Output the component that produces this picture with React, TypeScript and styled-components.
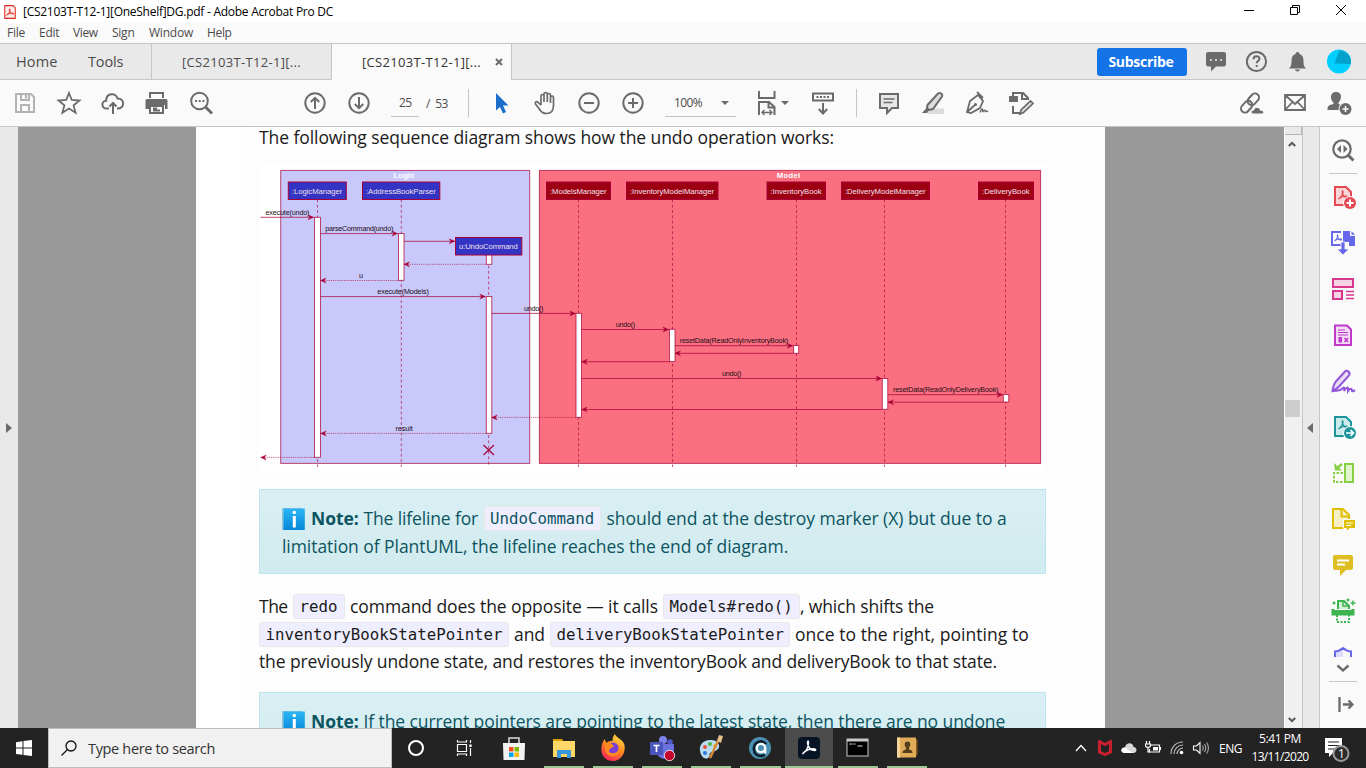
import React from "react";
import styled, { createGlobalStyle } from "styled-components";

const UI = `"Open Sans", "Noto Sans", sans-serif`;
const INK = "#6b6b6b";
const UML = "#a80036";

const GlobalStyle = createGlobalStyle`
  * { box-sizing: border-box; }
  body { margin: 0; overflow: hidden; font-family: ${UI}; background: #fff; }
`;

const Window = styled.div`
  width: 1366px;
  height: 768px;
  display: flex;
  flex-direction: column;
  overflow: hidden;
  background: #fafafa;
`;

const Label = styled.span<{ $size: number; $w?: number; $ls?: number; $color?: string; $bold?: boolean }>`
  flex: none;
  white-space: pre;
  font-size: ${(p) => p.$size}px;
  width: ${(p) => (p.$w ? `${p.$w}px` : "auto")};
  letter-spacing: ${(p) => p.$ls ?? 0}px;
  color: ${(p) => p.$color ?? "#4b4b4b"};
  font-weight: ${(p) => (p.$bold ? 700 : 400)};
`;

const Spacer = styled.div`
  flex: 1;
`;

/* ---------- window chrome ---------- */

const TitleBar = styled.header`
  flex: none;
  height: 23px;
  display: flex;
  align-items: center;
  padding-left: 3px;
  gap: 6px;
  background: #fff;
`;

const WindowButtons = styled.div`
  display: flex;
  height: 100%;
  padding: 0 2px 3px 0;
`;

const WindowButton = styled.div`
  width: 46px;
  display: flex;
  align-items: center;
  justify-content: center;
`;

const MenuBar = styled.nav`
  flex: none;
  height: 20px;
  display: flex;
  align-items: center;
  padding-left: 7px;
  background: #fafafa;
`;

const MenuItem = styled.div<{ $w: number }>`
  width: ${(p) => p.$w}px;
  display: flex;
  line-height: 18px;
`;

const TabBar = styled.div`
  flex: none;
  height: 37px;
  display: flex;
  background: #e9e9e9;
  border-top: 1px solid #c6c6c6;
  border-bottom: 1px solid #c6c6c6;
`;

const TabHome = styled.div`
  width: 152px;
  display: flex;
  align-items: center;
  gap: 30px;
  padding-left: 16px;
  border-right: 1px solid #c6c6c6;
`;

const Tab = styled.div<{ $active?: boolean }>`
  width: 180px;
  height: ${(p) => (p.$active ? 36 : 35)}px;
  display: flex;
  align-items: center;
  padding-left: 30px;
  gap: 12.5px;
  border-right: 1px solid #c6c6c6;
  background: ${(p) => (p.$active ? "#fafafa" : "transparent")};
`;

const TabActions = styled.div`
  display: flex;
  align-items: center;
  gap: 13px;
  padding-right: 13px;
`;

const SubscribeButton = styled.button`
  width: 90px;
  height: 28px;
  margin-right: 2px;
  padding: 0 2px 0 0;
  border: 0;
  border-radius: 3px;
  background: #1473e6;
  font-family: ${UI};
  line-height: 26px;
`;

const Toolbar = styled.div`
  flex: none;
  height: 47px;
  display: flex;
  align-items: center;
  padding-right: 13px;
  background: #fafafa;
  border-bottom: 1px solid #c6c6c6;
`;

const ToolGroup = styled.div<{ $left?: number }>`
  display: flex;
  align-items: center;
  gap: 16px;
  margin-left: ${(p) => p.$left ?? 0}px;
`;

const Divider = styled.div<{ $left: number }>`
  width: 1px;
  height: 28px;
  margin-left: ${(p) => p.$left}px;
  background: #c6c6c6;
`;

const Field = styled.div<{ $w: number; $left: number; $pad: number }>`
  width: ${(p) => p.$w}px;
  height: 28px;
  margin-left: ${(p) => p.$left}px;
  padding-left: ${(p) => p.$pad}px;
  display: flex;
  align-items: center;
  border-bottom: 1px solid #c2c2c2;
`;

const Caret = styled.i<{ $left: number }>`
  margin-left: ${(p) => p.$left}px;
  border: 4px solid transparent;
  border-top-color: #6b6b6b;
  border-bottom: 0;
`;

/* ---------- workspace ---------- */

const Workspace = styled.div`
  flex: none;
  height: 601px;
  display: flex;
  overflow: hidden;
`;

const SideHandle = styled.div<{ $w: number; $right?: boolean }>`
  flex: none;
  width: ${(p) => p.$w}px;
  display: flex;
  align-items: center;
  justify-content: ${(p) => (p.$right ? "flex-start" : "center")};
  padding-left: ${(p) => (p.$right ? 4 : 0)}px;
  background: #e9e9e9;
  border-left: ${(p) => (p.$right ? "1px solid #c6c6c6" : "0")};
  border-right: ${(p) => (p.$right ? "1px solid #c6c6c6" : "0")};
`;

const HandleArrow = styled.i<{ $dir: "left" | "right" }>`
  border: 5px solid transparent;
  ${(p) =>
    p.$dir === "right"
      ? "border-left: 6px solid #6b6b6b; border-right: 0;"
      : "border-right: 6px solid #6b6b6b; border-left: 0;"}
`;

const Canvas = styled.div`
  flex: none;
  width: 1266px;
  display: flex;
  background: #999;
  padding-left: 178px;
`;

const Page = styled.main`
  width: 909px;
  padding-left: 63px;
  background: linear-gradient(to right, #fff 45px, #fdfdfd 45px);
  overflow: hidden;
`;

const Article = styled.div`
  width: 787px;
`;

const Line = styled.p<{ $color?: string; $h?: number }>`
  margin: 0;
  height: ${(p) => p.$h ?? 27.5}px;
  line-height: ${(p) => p.$h ?? 27.5}px;
  font-size: 17.5px;
  display: flex;
  align-items: center;
  color: ${(p) => p.$color ?? "#1a1a1a"};
  white-space: pre;
`;

const Chunk = styled.span<{ $w?: number; $ls?: number; $bold?: boolean }>`
  flex: none;
  width: ${(p) => (p.$w ? `${p.$w}px` : "auto")};
  letter-spacing: ${(p) => p.$ls ?? -0.075}px;
  font-weight: ${(p) => (p.$bold ? 700 : 400)};
`;

const Code = styled.code<{ $w: number; $gap: number }>`
  flex: none;
  width: ${(p) => p.$w}px;
  height: 25px;
  margin-right: ${(p) => p.$gap}px;
  padding-left: 5.5px;
  line-height: 24px;
  border: 1px solid #e8e8e8;
  border-radius: 3px;
  background: #eef;
  font-family: "DejaVu Sans Mono", monospace;
  font-size: 15.75px;
`;

const Figure = styled.figure`
  margin: 15px 0 17px;
  height: 309px;
  background: #fff;
`;

const Note = styled.aside`
  height: 85px;
  margin-bottom: 19px;
  padding: 15px 22px;
  border: 1px solid #bee5eb;
  background: linear-gradient(#d9eff3, #d1ebef);
`;

const Prose = styled.div`
  height: 99px;
`;

const ScrollBar = styled.div`
  flex: none;
  width: 18px;
  display: flex;
  flex-direction: column;
  align-items: center;
  border-left: 1px solid #fff;
  background: #f0f0f0;
  padding-bottom: 4px;
`;

const ScrollSplit = styled.div`
  width: 100%;
  height: 8px;
  margin-bottom: 5px;
  background: #e9e9e9;
  border-bottom: 1px solid #b5b5b5;
  border-right: 1px solid #b5b5b5;
`;

const ScrollThumb = styled.div`
  width: 15px;
  height: 17px;
  margin: 252px 2px 0 0;
  background: #cdcdcd;
`;

const ScrollArrow = styled.div`
  margin-right: 3px;
`;

const ToolPane = styled.aside`
  flex: none;
  width: 46px;
  display: flex;
  flex-direction: column;
  align-items: center;
  padding-top: 9px;
  background: #fafafa;
`;

const PaneRule = styled.hr<{ $top: number; $bottom: number }>`
  flex: none;
  width: 28px;
  height: 1px;
  border: 0;
  margin: ${(p) => p.$top}px 0 ${(p) => p.$bottom}px;
  background: #c6c6c6;
`;

const PaneList = styled.div`
  flex: none;
  height: 474px;
  margin-bottom: 4px;
  display: flex;
  flex-direction: column;
  gap: 18px;
  overflow: hidden;
`;

/* ---------- taskbar ---------- */

const TaskBar = styled.footer`
  flex: none;
  height: 40px;
  display: flex;
  background: #232323;
`;

const StartButton = styled.div`
  width: 48px;
  display: flex;
  align-items: center;
  justify-content: center;
`;

const SearchBox = styled.div`
  width: 344px;
  display: flex;
  align-items: center;
  gap: 11px;
  padding-left: 12px;
  background: #f1f1f1;
  border: 1px solid #bcbcbc;
`;

const TaskItem = styled.div<{ $open?: boolean; $active?: boolean; $w?: number }>`
  position: relative;
  width: ${(p) => p.$w ?? 49}px;
  display: flex;
  align-items: center;
  justify-content: center;
  background: ${(p) => (p.$active ? "#4c4c4c" : "transparent")};
  &::after {
    content: "";
    position: absolute;
    bottom: 0;
    left: ${(p) => (p.$active ? 0 : 5)}px;
    right: ${(p) => (p.$active ? 0 : 4)}px;
    height: 2px;
    background: ${(p) => (p.$open ? "#9cc893" : "transparent")};
  }
`;

const Tray = styled.div`
  display: flex;
  align-items: center;
`;

const TraySlot = styled.div<{ $w: number }>`
  width: ${(p) => p.$w}px;
  display: flex;
  justify-content: center;
`;

const Clock = styled.div`
  width: 64px;
  display: flex;
  flex-direction: column;
  align-items: center;
  line-height: 18px;
`;

/* ---------- icons ---------- */

type GlyphProps = { children: React.ReactNode; size?: number; stroke?: string; sw?: number; box?: string };

const GlyphSvg = styled.svg`
  display: block;
  flex: none;
`;

const Glyph = ({ children, size = 28, stroke = INK, sw = 2, box }: GlyphProps) => (
  <GlyphSvg width={size} height={size} viewBox={box ?? `0 0 ${size} ${size}`} fill="none" stroke={stroke} strokeWidth={sw}>
    {children}
  </GlyphSvg>
);

const PDF_CURVE = "M0 8C3 6 5 2 4.400.200 4-.800 3.200.600 4 2.600 5 5 7 7 9 6.600c1-.400 0-1.600-2-1.400C4 5.400 1.500 6.500 0 8z";

const PaneIcons = [
  <Glyph stroke="#e34850" key="create">
    <path d="M6 4h11l5 5v13H6z" fill="#f9d5d7" />
    <path d={PDF_CURVE} transform="translate(9.500 8)" strokeWidth="1.300" />
    <circle cx="21" cy="20" r="7" fill="#fafafa" stroke="none" />
    <circle cx="21" cy="20" r="6" fill="#e34850" stroke="none" />
    <path d="M21 16.500v7M17.500 20h7" stroke="#fff" />
  </Glyph>,
  <Glyph stroke="#6767ec" key="combine">
    <path d="M12 16H3V3h9" />
    <path d="M14 2h7v5h5v10h-6v-4h-6z" fill="#6767ec" stroke="none" />
    <path d="M22.500 2.200v3.500h3.500z" fill="#6767ec" stroke="none" />
    <path d={PDF_CURVE} transform="translate(5.500 6) scale(.75)" strokeWidth="1.400" />
    <path d="M12 13h4v7h4l-6 6-6-6h4z" fill="#6767ec" stroke="#fafafa" strokeWidth="0.800" />
  </Glyph>,
  <Glyph stroke="#d83790" key="organise">
    <path d="M4 4h20v8H4zM4 16h9v8H4z" fill="#f7d3e5" />
    <path d="M17 16.500h8M17 20h8M17 23.500h8" strokeWidth="1.300" />
  </Glyph>,
  <Glyph stroke="#c038cc" key="redact">
    <path d="M6 4.500h12l4 4V24H6z" fill="#f3daf5" />
    <path d="M9 9h7M9 11.500h10M9 14h10" strokeWidth="1.200" />
    <path d="M9.500 16H13v5l-1.750 1L9.500 21z" fill="#c038cc" stroke="none" />
    <path d="M15.500 17l3.500 4M19 17l-3.500 4" strokeWidth="1.500" />
  </Glyph>,
  <Glyph stroke="#9256d9" key="sign">
    <path d="M3.500 24c.5-4 1.500-7 3-9L16 4.500c2-2 6 1 4 4L10 19.500C8 21.500 6 23 3.500 24z" fill="#e9ddf8" />
    <path d="M4 24c5 0 8-1 10-3 1-1.500 2 .5 1 3 2-3 4-5 4-2v2c2-3 4-3 4 0 1 1 2 0 3-1" />
  </Glyph>,
  <Glyph stroke="#1b959a" key="export">
    <path d="M6 4h11l5 5v14H6z" fill="#cdebec" />
    <path d={PDF_CURVE} transform="translate(9.500 8)" strokeWidth="1.300" />
    <circle cx="21" cy="20" r="7" fill="#fafafa" stroke="none" />
    <circle cx="21" cy="20" r="6" fill="#1b959a" stroke="none" />
    <path d="M17 20h7M21.500 17l3 3-3 3" stroke="#fff" strokeWidth="1.700" />
  </Glyph>,
  <Glyph stroke="#85d044" key="reorder">
    <path d="M16 5h8v18h-8z" fill="#e0f5cf" />
    <path d="M13 5L7 10" strokeWidth="2.500" />
    <path d="M5 4l1 7.500h7z" fill="#85d044" stroke="none" />
    <path d="M14 14H5v9h9" strokeDasharray="2.500 1.500" />
  </Glyph>,
  <Glyph stroke="#dfbf00" key="send">
    <path d="M4 4h10l6 6v13H4z" fill="#f6efc4" />
    <path d="M12.500 4v7.500H20" />
    <path d="M14.500 14.500H26.500v9h-6l-3 3.500v-3.500h-3z" fill="#dfbf00" stroke="#fafafa" strokeWidth="1" />
    <path d="M17 18h7M17 20.500h5" stroke="#fff" strokeWidth="1.200" />
  </Glyph>,
  <Glyph stroke="none" key="comment">
    <path d="M6 4h16q2 0 2 2v11q0 2-2 2h-5l-6 6v-6H6q-2 0-2-2V6q0-2 2-2z" fill="#debe22" />
    <path d="M8 9.500h12M8 13.500h8" stroke="#fff" strokeWidth="1.800" />
  </Glyph>,
  <Glyph stroke="#3db450" key="enhance">
    <path d="M9 12V4h6l5 5v3" fill="#d5f0d8" />
    <path d="M14 4v5h6" strokeWidth="1.500" />
    <path d="M4 12v5h20v-5" strokeWidth="3" />
    <path d="M5 15h18" strokeWidth="4" />
    <path d="M8 18v7h12v-7" strokeDasharray="2 1.500" />
    <path d="M24 3.500v5M21.500 6h5M5 4.500v3M3.500 6h3M19 1.500v3M17.500 3h3" strokeWidth="1.400" />
  </Glyph>,
  <Glyph stroke="#6767ec" key="protect">
    <path d="M6 20V8l8-3v15z" fill="#dcdcfb" stroke="none" />
    <path d="M6 22V8.500c3 0 5-1 8-3.500 3 2.500 5 3.500 8 3.500V22" />
  </Glyph>,
];

/* ---------- sequence diagram ---------- */

const DIAGRAM_FONT = `"Liberation Sans", Arial, sans-serif`;

const Participant = ({ x, y, w, name, model }: { x: number; y: number; w: number; name: string; model?: boolean }) => (
  <g>
    <rect x={x} y={y} width={w} height={17.5} fill={model ? "#9d0012" : "#3333c4"} stroke={UML} />
    <text x={x + 3.5} y={y + 11.7} textLength={w - 7.5} fontSize="7.700" fill="#f0e2ea">
      {name}
    </text>
  </g>
);

const Lifeline = ({ x, y = 199.5 }: { x: number; y?: number }) => (
  <path d={`M${x} ${y}V467`} stroke={UML} strokeOpacity="0.650" strokeDasharray="2.800 2.500" />
);

const Activation = ({ x, y, h, w = 5.5 }: { x: number; y: number; h: number; w?: number }) => (
  <rect x={x} y={y} width={w} height={h} fill="#fff" stroke={UML} strokeOpacity="0.800" strokeWidth="0.900" />
);

const Message = ({ from, to, y, dashed }: { from: number; to: number; y: number; dashed?: boolean }) => {
  const d = to > from ? -1 : 1;
  return (
    <g>
      <path d={`M${from} ${y}H${to}`} stroke={UML} strokeWidth="0.850" strokeOpacity={dashed ? 0.7 : 0.85} strokeDasharray={dashed ? "1.200 1" : undefined} />
      <path d={`M${to} ${y}l${d * 5.5} -2.500l${d * -1.8} 2.500l${d * 1.8} 2.500z`} fill={UML} stroke={UML} strokeWidth="0.400" />
    </g>
  );
};

const Caption = ({ x, y, w, children }: { x: number; y: number; w: number; children: string }) => (
  <text x={x} y={y} textLength={w} fontSize="7.200" fill="#1c0c14">
    {children}
  </text>
);

const SequenceDiagram = () => (
  <GlyphSvg width={787} height={309} viewBox="259 163 787 309" fill="none" fontFamily={DIAGRAM_FONT}>
    <rect x="280.700" y="170.400" width="249" height="293" fill="#c8c8fa" stroke={UML} strokeOpacity="0.700" />
    <rect x="539.400" y="170.400" width="501.200" height="293" fill="#fb7081" stroke={UML} strokeOpacity="0.700" />
    <text x="393.500" y="178" textLength="21" fontSize="7.700" fontWeight="700" fill="#fff">Logic</text>
    <text x="776.700" y="178" textLength="23.500" fontSize="7.700" fontWeight="700" fill="#fff">Model</text>
    <Lifeline x={317.5} />
    <Lifeline x={401.3} />
    <Lifeline x={488.7} y={255} />
    <Lifeline x={578.5} />
    <Lifeline x={672.5} />
    <Lifeline x={796.5} />
    <Lifeline x={884.5} />
    <Lifeline x={1005.5} />
    <Participant x={288.3} y={182} w={58} name=":LogicManager" />
    <Participant x={362.5} y={182} w={77.3} name=":AddressBookParser" />
    <Activation x={486.3} y={253} h={11.3} />
    <Participant x={455.5} y={237.5} w={66.3} name="u:UndoCommand" />
    <Participant x={546.5} y={182} w={64} name=":ModelsManager" model />
    <Participant x={626.5} y={182} w={91.5} name=":InventoryModelManager" model />
    <Participant x={767} y={182} w={58.5} name=":InventoryBook" model />
    <Participant x={841.5} y={182} w={88} name=":DeliveryModelManager" model />
    <Participant x={978.5} y={182} w={55} name=":DeliveryBook" model />
    <Activation x={314.5} y={217.3} h={240} w={6} />
    <Activation x={398.5} y={233.5} h={46.8} />
    <Activation x={486.3} y={296.5} h={136.8} />
    <Activation x={576} y={313.3} h={104} />
    <Activation x={669.5} y={329.3} h={32.2} />
    <Activation x={793.7} y={345.5} h={7.8} w={5} />
    <Activation x={882.3} y={378.5} h={30.8} />
    <Activation x={1003.3} y={394.5} h={7.5} />
    <Message from={260.5} to={313.5} y={217.3} />
    <Message from={320.5} to={397.5} y={233.6} />
    <Message from={404} to={454.7} y={241.3} />
    <Message from={486} to={404} y={264.3} dashed />
    <Message from={398} to={320.5} y={280.5} dashed />
    <Message from={320.5} to={485.3} y={296.6} />
    <Message from={491.5} to={575.3} y={313.4} />
    <Message from={581.5} to={668.5} y={329.5} />
    <Message from={675} to={792.7} y={345.7} />
    <Message from={793.5} to={675} y={353.3} />
    <Message from={669.5} to={581.7} y={361.7} />
    <Message from={581.5} to={881.5} y={378.5} />
    <Message from={888} to={1002.5} y={394.7} />
    <Message from={1003} to={888} y={402.2} />
    <Message from={882} to={581.7} y={409.5} />
    <Message from={576} to={491.7} y={417.4} dashed />
    <Message from={486} to={320.7} y={433.4} dashed />
    <Message from={314} to={260.7} y={457.4} dashed />
    <path d="M483.500 445l10.500 10M494 445l-10.500 10" stroke={UML} strokeWidth="1.200" />
    <Caption x={265.5} y={214.7} w={44}>execute(undo)</Caption>
    <Caption x={325.3} y={231} w={68}>parseCommand(undo)</Caption>
    <Caption x={359} y={278} w={3.5}>u</Caption>
    <Caption x={377.3} y={294.3} w={51.5}>execute(Models)</Caption>
    <Caption x={524} y={310.7} w={19.5}>undo()</Caption>
    <Caption x={615.7} y={327} w={19.5}>undo()</Caption>
    <Caption x={679.7} y={343.2} w={108.5}>resetData(ReadOnlyInventoryBook)</Caption>
    <Caption x={722} y={375.7} w={19.5}>undo()</Caption>
    <Caption x={893} y={392} w={105.5}>resetData(ReadOnlyDeliveryBook)</Caption>
    <Caption x={395.5} y={431} w={17.3}>result</Caption>
  </GlyphSvg>
);

const InfoSvg = styled.svg`
  flex: none;
  margin-right: 6px;
`;

const InfoBadge = () => (
  <InfoSvg width="23" height="22" viewBox="0 0 23 22">
    <defs>
      <linearGradient id="info" x2="0" y2="1">
        <stop stopColor="#2cb5f5" />
        <stop offset="1" stopColor="#0388d8" />
      </linearGradient>
    </defs>
    <rect width="20" height="22" fill="#8fc6dc" />
    <rect x="1.500" y=".5" width="21.300" height="21.500" fill="url(#info)" />
    <circle cx="12.300" cy="4.500" r="1.800" fill="#fff" />
    <path d="M10.800 8h3v11.500h-3z" fill="#fff" />
  </InfoSvg>
);

const TEAL = "#0c5460";

export default function App() {
  return (
    <Window>
      <GlobalStyle />
      <TitleBar>
        <Glyph size={14} box="0 0 14 16" stroke="#e0281e" sw={1.2}>
          <path d="M1 .7h9.500L13 3v12.300H1z" fill="#fdeceb" />
          <path d={PDF_CURVE} transform="translate(3 4.500) scale(.9)" />
        </Glyph>
        <Label $size={12} $ls={-0.265} $color="#000">[CS2103T-T12-1][OneShelf]DG.pdf - Adobe Acrobat Pro DC</Label>
        <Spacer />
        <WindowButtons>
          <WindowButton>
            <Glyph size={12} stroke="#000" sw={1}><path d="M1 6.500h10" /></Glyph>
          </WindowButton>
          <WindowButton>
            <Glyph size={12} stroke="#000" sw={1}><path d="M1.500 3.500h7v7h-7zM3.500 3.500v-2h7v7h-2" /></Glyph>
          </WindowButton>
          <WindowButton>
            <Glyph size={12} stroke="#000" sw={1}><path d="M1 1l10 10M11 1L1 11" /></Glyph>
          </WindowButton>
        </WindowButtons>
      </TitleBar>

      <MenuBar>
        <MenuItem $w={32}><Label $size={12} $ls={-0.25}>File</Label></MenuItem>
        <MenuItem $w={34}><Label $size={12} $ls={-0.25}>Edit</Label></MenuItem>
        <MenuItem $w={39}><Label $size={12} $ls={-0.4}>View</Label></MenuItem>
        <MenuItem $w={37}><Label $size={12} $ls={-0.25}>Sign</Label></MenuItem>
        <MenuItem $w={58}><Label $size={12} $ls={-0.22}>Window</Label></MenuItem>
        <MenuItem $w={40}><Label $size={12} $ls={-0.35}>Help</Label></MenuItem>
      </MenuBar>

      <TabBar>
        <TabHome>
          <Label $size={14.5} $w={42} $ls={0.15}>Home</Label>
          <Label $size={14.5} $ls={-0.15}>Tools</Label>
        </TabHome>
        <Tab><Label $size={13} $w={120} $ls={0.31}>[CS2103T-T12-1][...</Label></Tab>
        <Tab $active>
          <Label $size={13} $w={120} $ls={0.31} $color="#333">[CS2103T-T12-1][...</Label>
          <Glyph size={8}><path d="M1 1l6 6M7 1L1 7" /></Glyph>
        </Tab>
        <Spacer />
        <TabActions>
          <SubscribeButton><Label $size={14} $bold $ls={-0.28} $color="#fff">Subscribe</Label></SubscribeButton>
          <Glyph stroke="none">
            <path d="M6 4h16q2 0 2 2v10.500q0 2-2 2H14l-5 5v-5H6q-2 0-2-2V6q0-2 2-2z" fill={INK} />
            <path d="M8 12h2M13 12h2M18 12h2" stroke="#e9e9e9" strokeWidth="1.500" />
          </Glyph>
          <Glyph>
            <circle cx="13.500" cy="13.500" r="9.600" />
            <path d="M10.500 11.300c0-4 6-3.800 6-.6 0 2-2.800 2-2.800 4.500M13.700 17v2" />
          </Glyph>
          <Glyph stroke="none">
            <path d="M13.500 4c1 0 2 .8 2 2 3 1 4 3.500 4 7 0 4 .5 5.500 2.500 7.500H5c2-2 2.500-3.500 2.500-7.500 0-3.500 1-6 4-7 0-1.200 1-2 2-2zM11 21.500h5c-.5 2.500-4.500 2.500-5 0z" fill={INK} />
          </Glyph>
          <Glyph stroke="none">
            <circle cx="14" cy="13.500" r="12" fill="#00cfff" />
            <path d="M9.500 15.500L14 2.500c6-.5 12 5 12 11l-.5 2.500z" fill="#00a2cc" />
          </Glyph>
        </TabActions>
      </TabBar>

      <Toolbar>
        <ToolGroup $left={11}>
          <Glyph stroke="#b3b3b3">
            <path d="M5 5h15l3 3v15H5zM10 5v6h8V5M10 23v-7h8v7" />
            <path d="M15 6v3.500" />
          </Glyph>
          <Glyph><path d="M14 4l2.800 7 7.700.5-5.900 4.900 2 7.400L14 19.600l-6.600 4.200 2-7.400-5.900-4.900 7.700-.5z" strokeWidth="1.800" /></Glyph>
          <Glyph>
            <path d="M10 19.500H8c-6 0-6-7.500-.8-7.800C7 4 17 3 18.500 9.500c7.500 0 7.500 10 0 10H18" />
            <path d="M14 25V14M10.500 17.500L14 14l3.500 3.500" />
          </Glyph>
          <Glyph stroke="none">
            <path d="M6 3h15v6h-2V5H8v4H6zM4 10h19q1.500 0 1.500 1.500V20H22v-4H6v4H2.500v-8.500Q2.500 10 4 10z" fill={INK} />
            <path d="M7 17h13v7H7z" stroke={INK} strokeWidth="2" />
            <path d="M10 19.500h4M10 21.500h7" stroke={INK} />
          </Glyph>
          <Glyph>
            <circle cx="12.500" cy="12" r="8.300" />
            <path d="M18.500 18l6.500 6.500" strokeWidth="3" />
            <path d="M8 12h2M11.700 12h2M15.400 12h2" />
          </Glyph>
        </ToolGroup>
        <ToolGroup $left={86}>
          <Glyph><circle cx="14" cy="14" r="9.700" /><path d="M14 20V9M9.800 13L14 8.800l4.200 4.200" /></Glyph>
          <Glyph><circle cx="14" cy="14" r="9.700" /><path d="M14 8v11M9.800 15l4.200 4.200 4.200-4.200" /></Glyph>
        </ToolGroup>
        <Field $w={28} $left={18} $pad={8}><Label $size={12} $ls={-0.7}>25</Label></Field>
        <ToolGroup $left={7}><Label $size={12} $ls={-0.5} $w={28}>/  53</Label></ToolGroup>
        <Divider $left={14} />
        <ToolGroup $left={18}>
          <Glyph stroke="none"><path d="M9 4v17.500l4-3.500 3 6.500 3-1.500-3-6.500h5.500z" fill="#1b6fcb" /></Glyph>
          <Glyph sw={1.7}>
            <path d="M10 16V7c0-2 3-2 3 0v6V5c0-2 3.300-2 3.300 0v8V6c0-2 3.200-2 3.200 0v8V8.500c0-2 3-2 3 0v8c0 5-2 8-7 8-4 0-6-2-7.500-5L4.500 15c-.8-2.200 1.800-3.200 3-1.200L10 16" />
          </Glyph>
          <Glyph><circle cx="14" cy="14" r="9.700" /><path d="M9 14h10" /></Glyph>
          <Glyph><circle cx="14" cy="14" r="9.700" /><path d="M9 14h10M14 9v10" /></Glyph>
        </ToolGroup>
        <Field $w={71} $left={18} $pad={9}>
          <Label $size={12} $ls={-0.6} $w={29}>100%</Label>
          <Caret $left={18} />
        </Field>
        <ToolGroup $left={17}>
          <Glyph>
            <path d="M6 2v7h15.500V2M6 26V13h10l5.500 5v8M15.500 13v5.500h6.500" />
            <path d="M9 23.500h9.500M11.500 21L9 23.500l2.500 2.500M16.500 21l2.500 2.500-2.500 2.500" strokeWidth="1.400" />
          </Glyph>
        </ToolGroup>
        <Caret $left={0} />
        <ToolGroup $left={20}>
          <Glyph>
            <path d="M4 4.500h20v7H4z" />
            <path d="M7.500 8h13" strokeDasharray="2 1.500" />
            <path d="M14 14v10M9.800 20l4.200 4.500 4.200-4.500" />
          </Glyph>
        </ToolGroup>
        <Divider $left={19} />
        <ToolGroup $left={18}>
          <Glyph>
            <path d="M5 5h18v14h-6l-5 5v-5H5z" fill="#e6e6e6" />
            <path d="M8.500 10h11M8.500 13.500h9" strokeWidth="1.400" />
          </Glyph>
          <Glyph>
            <path d="M13 19.500h12V25H8z" fill="#dcdcdc" stroke="none" />
            <path d="M8.500 16L19 4.500c2-1.500 5 .5 4 3L14 20l-4 1-2-2z" fill="#dcdcdc" />
            <path d="M7.500 19L3 24h5l2.500-3z" fill={INK} stroke="none" />
          </Glyph>
          <Glyph>
            <path d="M14 3l6 6M4 23l3-11 8-6 5 6-3 7-9 5zM4 23l8-7" strokeWidth="1.800" />
            <circle cx="12.500" cy="15.500" r="1.500" fill={INK} stroke="none" />
            <path d="M17 23.500c2-5 3-4 2.500-.5 2-3 3-2 2.500 0 1-1.500 2-1 3 0" strokeWidth="1.400" />
          </Glyph>
          <Glyph>
            <path d="M6 8V4h10l5 5v2M15 4v6h6M6 17v7h7" />
            <path d="M2 7h9v6H2z" fill={INK} stroke="none" />
            <path d="M13 25l1-4 9.500-9 2.500 2.500-9.500 9z" strokeWidth="1.700" fill="#dcdcdc" />
          </Glyph>
        </ToolGroup>
        <Spacer />
        <ToolGroup>
          <Glyph>
            <g transform="rotate(-48 13 14)">
              <rect x="1.500" y="10" width="13" height="8" rx="4" />
              <rect x="11.500" y="10" width="13" height="8" rx="4" />
            </g>
            <path d="M16 25c-3-.5-2-4 .5-3.700 1-4 6-4 7 0 4-.3 4 3.700 1.500 3.700z" fill={INK} stroke="#fafafa" strokeWidth="1" />
          </Glyph>
          <Glyph sw={1.8}><path d="M4 6h20v15H4zM4 6l10 9L24 6M4 21l7.500-8M24 21l-7.500-8" /></Glyph>
          <Glyph stroke="none">
            <path d="M11 3c7 0 5.500 8 2.500 10.500v1.500c4 1.500 5 2 5 6H2.500c0-4 1-5 6-6v-1.500C5 11 4.500 3 11 3z" fill={INK} />
            <circle cx="20.500" cy="20" r="7" fill="#fafafa" />
            <circle cx="20.500" cy="20" r="6" fill={INK} />
            <path d="M20.500 17v6M17.500 20h6" stroke="#fff" strokeWidth="1.500" />
          </Glyph>
        </ToolGroup>
      </Toolbar>

      <Workspace>
        <SideHandle $w={18}><HandleArrow $dir="right" /></SideHandle>
        <Canvas>
          <Page>
            <Article>
              <Line $h={21}><Chunk>The following sequence diagram shows how the undo operation works:</Chunk></Line>
              <Figure><SequenceDiagram /></Figure>
              <Note>
                <Line $color={TEAL}>
                  <InfoBadge />
                  <Chunk $bold $w={52.5}>Note:</Chunk>
                  <Chunk $w={120} $ls={-0.14}>The lifeline for</Chunk>
                  <Code $w={117} $gap={6}>UndoCommand</Code>
                  <Chunk $ls={-0.03}>should end at the destroy marker (X) but due to a</Chunk>
                </Line>
                <Line $color={TEAL}><Chunk $ls={-0.055}>limitation of PlantUML, the lifeline reaches the end of diagram.</Chunk></Line>
              </Note>
              <Prose>
                <Line>
                  <Chunk $w={34} $ls={-0.5}>The</Chunk>
                  <Code $w={52} $gap={5}>redo</Code>
                  <Chunk $w={313}>command does the opposite — it calls</Chunk>
                  <Code $w={137} $gap={0}>Models#redo()</Code>
                  <Chunk $ls={-0.15}>, which shifts the</Chunk>
                </Line>
                <Line>
                  <Code $w={250} $gap={5}>inventoryBookStatePointer</Code>
                  <Chunk $w={36}>and</Chunk>
                  <Code $w={240} $gap={5}>deliveryBookStatePointer</Code>
                  <Chunk $ls={0.05}>once to the right, pointing to</Chunk>
                </Line>
                <Line><Chunk $ls={-0.114}>the previously undone state, and restores the inventoryBook and deliveryBook to that state.</Chunk></Line>
              </Prose>
              <Note>
                <Line $color={TEAL}>
                  <InfoBadge />
                  <Chunk $bold $w={52.5}>Note:</Chunk>
                  <Chunk $ls={-0.09}>If the current pointers are pointing to the latest state, then there are no undone</Chunk>
                </Line>
              </Note>
            </Article>
          </Page>
        </Canvas>
        <ScrollBar>
          <ScrollSplit />
          <ScrollArrow><Glyph size={8} box="0 0 8 6" stroke="#555"><path d="M.8 5L4 1.800 7.200 5" /></Glyph></ScrollArrow>
          <ScrollThumb />
          <Spacer />
          <ScrollArrow><Glyph size={8} box="0 0 8 6" stroke="#555"><path d="M.8 1L4 4.200 7.200 1" /></Glyph></ScrollArrow>
        </ScrollBar>
        <SideHandle $w={18} $right><HandleArrow $dir="left" /></SideHandle>
        <ToolPane>
          <Glyph>
            <circle cx="13" cy="13" r="8.700" strokeWidth="2.200" />
            <path d="M19 19l5.500 5.500" strokeWidth="3" />
            <path d="M12 9v8l-4-4zM14.500 9v8l4-4z" fill={INK} stroke="none" />
          </Glyph>
          <PaneRule $top={9} $bottom={9} />
          <PaneList>{PaneIcons}</PaneList>
          <Glyph size={14}><path d="M1.500 4.500L7 9.500l5.500-5" strokeWidth="2.400" /></Glyph>
          <PaneRule $top={6} $bottom={9} />
          <Glyph><path d="M10.500 6v15M14 13.500h9M19.500 9.500l4 4-4 4" strokeWidth="2.300" /></Glyph>
        </ToolPane>
      </Workspace>

      <TaskBar>
        <StartButton>
          <Glyph size={16} stroke="none"><path d="M0 2.200L6.500 1.300V7.600H0zM7.500 1.100L16 0V7.600H7.500zM0 8.500h6.500v6.300L0 13.900zM7.500 8.500H16V16l-8.500-1.100z" fill="#fff" /></Glyph>
        </StartButton>
        <SearchBox>
          <Glyph size={16} stroke="#111" sw={1.3}><circle cx="10" cy="6" r="5" /><path d="M6.500 9.500L.5 15.500" /></Glyph>
          <Label $size={14.5} $ls={-0.34} $color="#333">Type here to search</Label>
        </SearchBox>
        <TaskItem $w={48}><Glyph size={20} stroke="#fff"><circle cx="10" cy="10" r="7" /></Glyph></TaskItem>
        <TaskItem $w={49}>
          <Glyph size={18} stroke="#fff" sw={1.2}><path d="M1.500 5.500h9v7h-9zM1.500 1v2h9V1M1.500 17v-2h9v2M14.500 1v3M14.500 9v8" /><path d="M13.300 5.500h2.400v2.400h-2.400z" fill="#fff" stroke="none" /></Glyph>
        </TaskItem>
        <TaskItem $w={50}>
          <Glyph size={26} stroke="none">
            <path d="M8 8V3h10v5" stroke="#ddd" strokeWidth="1.500" />
            <path d="M2 8h22l-.5 17h-21z" fill="#f3f3f3" />
            <path d="M8 12h4.500v4.500H8z" fill="#f25022" /><path d="M13.500 12H18v4.500h-4.500z" fill="#7fba00" />
            <path d="M8 17.500h4.500V22H8z" fill="#00a4ef" /><path d="M13.500 17.500H18V22h-4.500z" fill="#ffb900" />
          </Glyph>
        </TaskItem>
        <TaskItem $open>
          <Glyph size={24} stroke="none">
            <path d="M1 3h9l1.500 2.500H1z" fill="#e0a000" /><path d="M1 5h22v16H1z" fill="#ffd868" />
            <path d="M5 22v-8h14v8h-4v-4H9v4z" fill="#3a96dd" />
          </Glyph>
        </TaskItem>
        <TaskItem $open>
          <Glyph size={28} stroke="none">
            <defs>
              <linearGradient id="fox" x1=".8" y1="0" x2=".3" y2="1"><stop stopColor="#ffe14a" /><stop offset=".5" stopColor="#ff8a20" /><stop offset="1" stopColor="#f5245c" /></linearGradient>
            </defs>
            <path d="M16 0c1 4 8 5 9.500 11C27 20 21 27 14 27 6 27 1.500 21 2.500 13c.5-4 2-6 3-8l2 4c2-2 4-2 6-2 0-3 1-5.500 2.500-7z" fill="url(#fox)" />
            <circle cx="14" cy="14" r="5.500" fill="#7b3fd6" />
            <path d="M7 9c4-1 7 1 8 4-3 0-3 2-5 3-1 4 8 5 11-1 0 6-6 9-10 7-5-2-6-8-4-13z" fill="#ff8a20" />
          </Glyph>
        </TaskItem>
        <TaskItem $open>
          <Glyph size={28} stroke="none">
            <circle cx="15" cy="6" r="4" fill="#7b83eb" /><circle cx="22" cy="8" r="2.800" fill="#5059c9" />
            <path d="M9 10h17v9q-2 6-8 6-7 0-9-6z" fill="#6a72de" /><path d="M2 8h13v13H2z" fill="#4b53bc" />
            <path d="M5.500 11.500h6M8.500 11.500V18" stroke="#fff" strokeWidth="1.700" />
            <circle cx="21.500" cy="21.500" r="5.200" fill="#c4062e" stroke="#fff" strokeWidth=".8" />
          </Glyph>
        </TaskItem>
        <TaskItem $open>
          <Glyph size={28} stroke="none">
            <path d="M13 6C6 6 2 11 3 17s5 9 8 7 0-5 4-6 8-3 7-7-5-5-9-5z" fill="#b9dcf0" />
            <circle cx="8" cy="13" r="2" fill="#f04e3e" /><circle cx="13" cy="10" r="2" fill="#52b848" /><circle cx="18" cy="12" r="2" fill="#f7b52a" /><circle cx="8" cy="19" r="2" fill="#2b7de0" />
            <path d="M22 5l-9 19" stroke="#d78a3c" strokeWidth="2.500" /><path d="M20 7l2-6 4 1-2 7z" fill="#e5c08a" />
          </Glyph>
        </TaskItem>
        <TaskItem $open $w={50}>
          <Glyph size={24}>
            <circle cx="12" cy="12" r="11" fill="#4d90b4" stroke="none" />
            <path d="M17 19c-8 3-12-2-11-8 1-5 8-8 12-3" stroke="#0d1d28" strokeWidth="2.500" />
            <circle cx="13" cy="12" r="4.200" stroke="#fff" strokeWidth="2.200" /><path d="M17.200 12v5.500" stroke="#fff" strokeWidth="2.200" />
          </Glyph>
        </TaskItem>
        <TaskItem $open $active $w={48}>
          <Glyph size={24}><rect x="1" y="1" width="22" height="22" rx="4" fill="#071426" stroke="none" />
            <path d="M5.500 18C9 16 12 10 11.500 6c-.3-2-1.500-.5-.8 2 1 4 4 6.500 7 6.500 2 0 1-2-2-1.700-4 .2-8 2.200-10.200 5.200z" stroke="#fff" strokeWidth="1.400" />
          </Glyph>
        </TaskItem>
        <TaskItem $open>
          <Glyph size={24} stroke="none"><path d="M.5 2.500h22v18H.5z" fill="#c9c9c9" /><path d="M1.500 5.500h20v14h-20z" fill="#000" /><path d="M3.500 8h3M7.500 8h2M11.500 10h5" stroke="#ddd" strokeWidth="1.200" /></Glyph>
        </TaskItem>
        <TaskItem $open $w={49}>
          <Glyph size={24} stroke="none"><path d="M2 1.500h19v20H2z" fill="#e0ac57" /><path d="M2 1.500h3v20H2z" fill="#f6d598" /><path d="M21 3.500h1.500v16H21z" fill="#8a5a1c" /><path d="M12.500 5.500c4 0 3 5 1.500 6v2c3 .5 3.500 1.500 3.500 3.500h-10c0-2 .5-3 3.500-3.500v-2c-1.500-1-2.500-6 1.500-6z" fill="#54401f" /></Glyph>
        </TaskItem>
        <Spacer />
        <Tray>
          <TraySlot $w={24}><Glyph size={12} stroke="#fff" sw={1.3}><path d="M1 9l5-5.500L11 9" /></Glyph></TraySlot>
          <TraySlot $w={23}><Glyph size={16} stroke="#c8202f" sw={3}><path d="M2.500 1.500L8 4.500l5.500-3V12L8 14.500 2.500 12z" /></Glyph></TraySlot>
          <TraySlot $w={25}><Glyph size={16} stroke="none"><path d="M3 13c-4-1-3-6 1-5.500C5 2 12 2 12.500 7c4 0 4 6 0 6z" fill="#d8d8d8" /><path d="M3 13c-4-1-3-6 1-5.500L12 13z" fill="#fff" /></Glyph></TraySlot>
          <TraySlot $w={24}><Glyph size={16} stroke="#fff" sw={1.2}><path d="M6 5h8.500v7H4.500V9" /><path d="M8 7h5v3.500H8z" fill="#fff" stroke="none" /><path d="M1.500 1v3M4.500 1v3M.5 4h5v2q-2.500 3-5 0zM3 7v5h2M15.500 7v3" /></Glyph></TraySlot>
          <TraySlot $w={24}><Glyph size={16} stroke="#bbb" sw={1.2}><path d="M2 14C2 7 7 2 14 2M5 14c0-5 4-9 9-9M8 14c0-3 3-6 6-6" /><circle cx="12.500" cy="12.500" r="1.800" fill="#fff" stroke="none" /></Glyph></TraySlot>
          <TraySlot $w={24}><Glyph size={18} stroke="#fff" sw={1.1}><path d="M1.500 7h3L8 3.500v11L4.500 11h-3z" /><path d="M10.500 6.500q1.500 2.500 0 5M12.500 5q2.500 4 0 8M14.700 3.500q3.500 5.500 0 11" stroke="#aaa" /></Glyph></TraySlot>
          <TraySlot $w={35}><Label $size={12} $ls={-0.45} $color="#fff">ENG</Label></TraySlot>
          <Clock>
            <Label $size={12} $ls={-0.41} $color="#fff">5:41 PM</Label>
            <Label $size={12} $ls={-0.66} $color="#fff">13/11/2020</Label>
          </Clock>
          <TraySlot $w={48}>
            <Glyph size={28} stroke="none">
              <path d="M3 4h17v15h-9l-4 4v-4H3z" fill="#fff" /><path d="M6 8h11M6 11.500h11M6 15h7" stroke="#232323" strokeWidth="1.200" />
              <circle cx="19" cy="19.500" r="7.500" fill="#2b2b2b" stroke="#999" />
              <text x="16" y="24" fontFamily="Open Sans, sans-serif" fontSize="12" fill="#fff">1</text>
            </Glyph>
          </TraySlot>
          <TraySlot $w={6} />
        </Tray>
      </TaskBar>
    </Window>
  );
}
